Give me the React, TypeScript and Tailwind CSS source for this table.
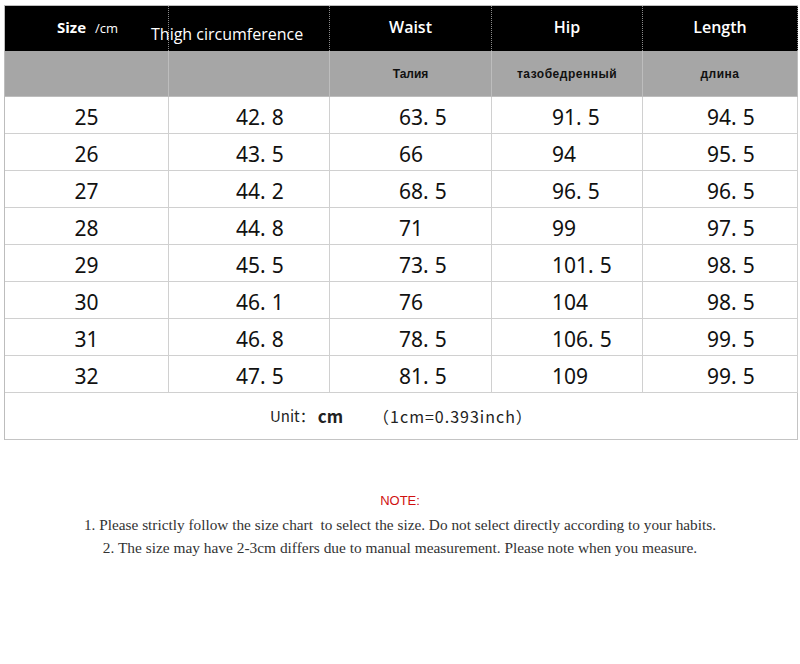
import React from "react";

const rows: string[][] = [
  ["25", "42.8", "63.5", "91.5", "94.5"],
  ["26", "43.5", "66", "94", "95.5"],
  ["27", "44.2", "68.5", "96.5", "96.5"],
  ["28", "44.8", "71", "99", "97.5"],
  ["29", "45.5", "73.5", "101.5", "98.5"],
  ["30", "46.1", "76", "104", "98.5"],
  ["31", "46.8", "78.5", "106.5", "99.5"],
  ["32", "47.5", "81.5", "109", "99.5"],
];

function Num({ v }: { v: string }) {
  const parts = v.split(".");
  if (parts.length === 1) return <span>{v}</span>;
  return (
    <span>
      {parts[0]}
      <span className="tracking-[6px]">.</span>
      {parts[1]}
    </span>
  );
}

const pads = ["justify-center", "pl-[67px]", "pl-[69px]", "pl-[60px]", "pl-[64px]"];

export default function App() {
  return (
    <div className="w-[800px] h-[664px] bg-white overflow-hidden">
      <div
        className="ml-[4px] mt-[5px] w-[794px] border-t border-l border-[#bdbdbd]"
        style={{ fontFamily: '"Open Sans", sans-serif' }}
      >
        {/* black header */}
        <div className="grid grid-cols-[164px_161px_162px_151px_155px] bg-black text-white">
          <div className="h-[45px] border-r border-dotted border-[#8a8a8a] flex items-center justify-center pb-[3px] pl-[2px]">
            <span className="leading-[20px]">
              <span className="text-[15px] font-bold">Size</span>
              <span className="text-[13px] ml-[9px]">/cm</span>
            </span>
          </div>
          <div className="h-[45px] border-r border-dotted border-[#8a8a8a] relative">
            <span className="absolute left-[-18px] top-[16px] text-[16px] whitespace-nowrap leading-[24px]">
              Thigh circumference
            </span>
          </div>
          <div className="h-[45px] border-r border-dotted border-[#8a8a8a] flex items-center justify-center pb-[4px] text-[16px] font-semibold">
            Waist
          </div>
          <div className="h-[45px] border-r border-dotted border-[#8a8a8a] flex items-center justify-center pb-[4px] text-[16px] font-semibold">
            Hip
          </div>
          <div className="h-[45px] border-r border-dotted border-[#8a8a8a] flex items-center justify-center pb-[4px] text-[16px] font-semibold">
            Length
          </div>
        </div>
        {/* gray sub header */}
        <div
          className="grid grid-cols-[164px_161px_162px_151px_155px] bg-[#a6a6a6] text-[#111] text-[12px] font-bold"
          style={{ fontFamily: '"Liberation Sans", Arial, sans-serif' }}
        >
          <div className="h-[46px] border-r border-b border-[#bdbdbd]" />
          <div className="h-[46px] border-r border-b border-[#bdbdbd]" />
          <div className="h-[46px] border-r border-b border-[#bdbdbd] flex items-center justify-center pt-[1px]">
            Талия
          </div>
          <div className="h-[46px] border-r border-b border-[#bdbdbd] flex items-center justify-center pt-[1px] tracking-[0.5px]">
            тазобедренный
          </div>
          <div className="h-[46px] border-r border-b border-[#bdbdbd] flex items-center justify-center pt-[1px] tracking-[0.5px]">
            длина
          </div>
        </div>
        {/* data rows */}
        {rows.map((r, i) => (
          <div
            key={i}
            className="grid grid-cols-[164px_161px_162px_151px_155px] text-[21px] text-[#111]"
            style={{ fontFamily: '"Noto Sans", sans-serif' }}
          >
            {r.map((v, j) => (
              <div
                key={j}
                className={`h-[37px] border-r border-b border-[#d0d0d0] flex items-center pt-[4px] leading-none ${pads[j]}`}
              >
                <Num v={v} />
              </div>
            ))}
          </div>
        ))}
        {/* unit row */}
        <div
          className="h-[47px] border-r border-b border-[#c4c4c4] flex items-center pl-[265px] text-[15px] text-[#222]"
          style={{ fontFamily: '"Noto Sans CJK SC", sans-serif' }}
        >
          <span>Unit：</span>
          <span className="font-bold text-[17px] ml-[3px]">cm</span>
          <span className="ml-[30px] text-[16px] tracking-[1px]">（1cm=0.393inch）</span>
        </div>
      </div>

      {/* notes */}
      <div className="mt-[51px] flex flex-col items-center" style={{ fontFamily: '"Liberation Serif", serif' }}>
        <div
          className="text-[13px] text-[#d01010] leading-[20px]"
          style={{ fontFamily: '"Liberation Sans", Arial, sans-serif' }}
        >
          NOTE:
        </div>
        <div className="text-[15.3px] text-[#333] leading-[23px] mt-[2px] whitespace-pre">
          1. Please strictly follow the size chart  to select the size. Do not select directly according to your habits.
        </div>
        <div className="text-[15.4px] text-[#333] leading-[23px] whitespace-pre">
          2. The size may have 2-3cm differs due to manual measurement. Please note when you measure.
        </div>
      </div>
    </div>
  );
}
